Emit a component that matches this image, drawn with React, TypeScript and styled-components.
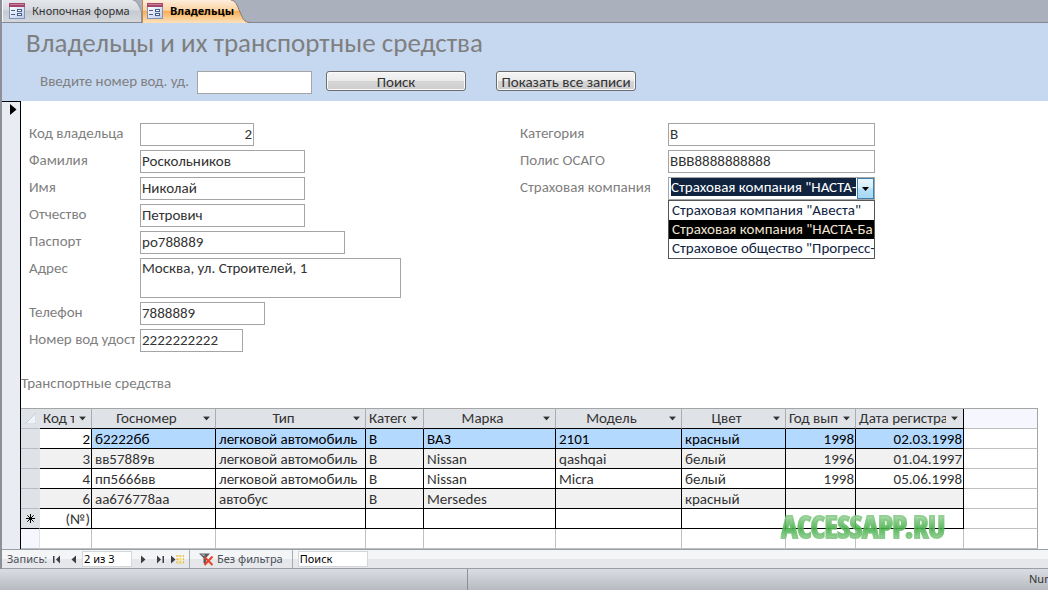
import React from 'react';
import styled, { createGlobalStyle, css } from 'styled-components';

const textFont = '"Carlito", "Open Sans", "Noto Sans", sans-serif';
const chromeFont = '"Noto Sans", "Open Sans", sans-serif';

const GlobalStyle = createGlobalStyle`
  * { box-sizing: border-box; }
  body { margin: 0; background: #fff; overflow: hidden; }
  button, input, select, textarea { font: inherit; color: inherit; margin: 0; border-radius: 0; }
  svg { flex: none; }
`;

const Window = styled.div`
  display: flex;
  flex-direction: column;
  min-height: 100vh;
  padding-bottom: 2px;
  font: 15px/20px ${textFont};
  color: #333;
`;

const Workspace = styled.div`
  flex: 1;
  display: flex;
  flex-direction: column;
  border-left: 2px solid #8d9097;
`;

/* Document tabs */

const TabBar = styled.div`
  display: flex;
  height: 23px;
  background: #abb1bc;
  border-bottom: 1px solid #85888d;
`;

const TabButton = styled.button<{ $active?: boolean }>`
  display: flex;
  border: 0;
  padding: 0;
  height: ${p => (p.$active ? 23 : 22)}px;
  background: none;
  font: ${p => (p.$active ? 'bold' : 'normal')} 11px/22px ${chromeFont};
  color: ${p => (p.$active ? '#000' : '#333')};
  white-space: nowrap;
`;

/* The caption may run on over the slanted edge, so the face is stacked above it. */
const TabFace = styled.span<{ $active?: boolean }>`
  position: relative;
  z-index: 1;
  display: flex;
  align-items: center;
  gap: 7px;
  height: 100%;
  padding: 0 0 1px ${p => (p.$active ? 4 : 6)}px;
  width: ${p => (p.$active ? 84 : 130)}px;
  border-left: 1px solid ${p => (p.$active ? '#b98a55' : '#f4f6f8')};
  background: ${p =>
    p.$active
      ? 'linear-gradient(#fdeedd 0, #fbd2a0 45%, #f9ae55 50%, #fbc98a 75%, #fde2bd 100%)'
      : 'linear-gradient(#e3e6ea 0, #d6dade 45%, #c6cbd1 50%, #d4d7dc 100%)'};
`;

const TabEdge = ({ active }: { active?: boolean }) =>
  active ? (
    <svg width="24" height="23" viewBox="0 0 24 23" aria-hidden="true">
      <defs>
        <linearGradient id="edgeActive" x1="0" y1="0" x2="0" y2="1">
          <stop offset="0" stopColor="#fdeedd" />
          <stop offset=".45" stopColor="#fbd2a0" />
          <stop offset=".5" stopColor="#f9ae55" />
          <stop offset=".75" stopColor="#fbc98a" />
          <stop offset="1" stopColor="#fde2bd" />
        </linearGradient>
      </defs>
      <path d="M0 0H5C10 1 11 5 14 12S18 22 23 22.5V23H0Z" fill="url(#edgeActive)" />
      <path d="M5 0C10 1 11 5 14 12S18 22 24 22.5" fill="none" stroke="#8b7a6a" />
    </svg>
  ) : (
    <svg width="10" height="22" viewBox="0 0 10 22" aria-hidden="true">
      <defs>
        <linearGradient id="edgeIdle" x1="0" y1="0" x2="0" y2="1">
          <stop offset="0" stopColor="#e3e6ea" />
          <stop offset=".45" stopColor="#d6dade" />
          <stop offset=".5" stopColor="#c6cbd1" />
          <stop offset="1" stopColor="#d4d7dc" />
        </linearGradient>
      </defs>
      <path d="M0 0H1C5 1 7 5 9.500 12V22H0Z" fill="url(#edgeIdle)" />
      <path d="M1 0C5 1 7 5 9.500 12V22" fill="none" stroke="#8f949c" />
    </svg>
  );

const FormIcon = () => (
  <svg width="16" height="16" viewBox="0 0 16 16" aria-hidden="true">
    <defs>
      <linearGradient id="formFace" x1="0" y1="0" x2="1" y2="1">
        <stop offset="0" stopColor="#ffffff" />
        <stop offset="1" stopColor="#b9c9ea" />
      </linearGradient>
    </defs>
    <rect x="0.500" y="3.500" width="15" height="12" fill="url(#formFace)" stroke="#8093bb" />
    <rect x="0" y="0" width="16" height="4" fill="#a4456b" />
    <rect x="1" y="1" width="14" height="1" fill="#c9809d" />
    <path d="M2 7.500H6M2 11.500H6" stroke="#4a5f8c" />
    <rect x="8.500" y="6.500" width="4" height="2" fill="#fff" stroke="#4a5f8c" />
    <rect x="8.500" y="10.500" width="4" height="2" fill="#fff" stroke="#4a5f8c" />
  </svg>
);

/* Form header */

const FormHeader = styled.header`
  height: 78px;
  padding-left: 24px;
  background: #c6d8f0;
  color: #7f7f7f;
`;

const Title = styled.h1`
  margin: 0;
  padding-top: 3px;
  font-size: 27px;
  line-height: 34px;
  font-weight: normal;
`;

const SearchRow = styled.form`
  display: flex;
  align-items: flex-start;
  padding: 11px 0 0 14px;
`;

const SearchLabel = styled.label`
  width: 157px;
  white-space: nowrap;
`;

const ButtonGroup = styled.div`
  display: flex;
  gap: 30px;
  margin-left: 14px;
`;

const Button = styled.button`
  width: 140px;
  height: 20px;
  padding: 0;
  border: 1px solid #6d6d6d;
  border-radius: 3px;
  background: linear-gradient(#f4f4f4 0, #ebebeb 48%, #d6d6d6 52%, #cdcdcd 100%);
  box-shadow: inset 0 0 0 1px #fafafa;
  line-height: 20px;
  color: #333;
  white-space: nowrap;
`;

/* Record details */

const Detail = styled.main`
  flex: 1;
  display: flex;
`;

const RecordSelector = styled.div`
  width: 19px;
  flex: none;
  padding: 2px 0 0 8px;
  background: #e9ecf2;
  border: solid #000;
  border-width: 1px 1px 0 0;

  svg { display: block; }
`;

const DetailBody = styled.div`
  flex: 1;
  min-width: 0;
  display: flex;
  flex-direction: column;
`;

const Columns = styled.div`
  display: grid;
  grid-template-columns: 491px 1fr;
  padding: 22px 0 0 8px;
`;

const FieldGroup = styled.div<{ $labelWidth: number }>`
  display: grid;
  grid-template-columns: ${p => p.$labelWidth}px 1fr;
  row-gap: 4px;
  align-content: start;
`;

const FieldLabel = styled.label`
  margin-right: 5px;
  overflow: hidden;
  color: #7f7f7f;
  white-space: nowrap;
`;

const box = css`
  border: 1px solid #a5a5a5;
  background: #fff;
  color: #333;
  outline: 0;
`;

const TextInput = styled.input<{ $width: number; $right?: boolean }>`
  ${box}
  width: ${p => p.$width}px;
  height: 23px;
  padding: 0 1px 2px;
  text-align: ${p => (p.$right ? 'right' : 'left')};
`;

const TextBlock = styled.textarea`
  ${box}
  display: block;
  width: 261px;
  height: 40px;
  padding: 0 1px;
  line-height: 19px;
  resize: none;
  overflow: hidden;
`;

const Combo = styled.div`
  ${box}
  position: relative;
  display: flex;
  width: 207px;
  height: 23px;
  padding: 0 0 0 2px;
`;

const ComboSelect = styled.select`
  flex: 1;
  min-width: 0;
  height: 18px;
  padding: 0;
  border: 0;
  appearance: none;
  outline: 0;
  background: #10243f;
  color: #fff;
  line-height: 18px;
  text-overflow: clip;
`;

const ComboButton = styled.button`
  display: flex;
  align-items: center;
  justify-content: center;
  width: 17px;
  height: 21px;
  margin-left: 1px;
  padding: 0;
  border: 1px solid #3c7fb1;
  background: linear-gradient(#e8f5fd 0, #d3ecfb 48%, #b8e0f8 52%, #a6d8f5 100%);
`;

const ComboList = styled.ul`
  position: absolute;
  left: -1px;
  right: -1px;
  top: 22px;
  margin: 0;
  padding: 0;
  list-style: none;
  border: 1px solid #555;
  background: #fff;
`;

const ComboOption = styled.li<{ $selected?: boolean }>`
  height: 19px;
  padding-left: 3px;
  overflow: hidden;
  line-height: 19px;
  white-space: nowrap;
  color: ${p => (p.$selected ? '#efe3d0' : '#10243f')};
  background: ${p => (p.$selected ? '#000' : '#fff')};
`;

/* Vehicles datasheet */

const SheetCaption = styled.h2`
  margin: 21px 0 0;
  font-size: 15px;
  line-height: 20px;
  font-weight: normal;
  color: #7f7f7f;
`;

const SheetFrame = styled.div`
  position: relative;
  margin: 15px 10px 0 0;
`;

const Sheet = styled.table`
  width: 100%;
  table-layout: fixed;
  border-spacing: 0;
  border-top: 1px solid #a5a5a5;
`;

const Col = styled.col<{ $width?: number }>`
  width: ${p => (p.$width ? `${p.$width}px` : 'auto')};
`;

const cellBase = css`
  height: 20px;
  padding: 0;
  overflow: hidden;
  font-weight: normal;
  white-space: nowrap;
`;

const HeadCell = styled.th<{ $last?: boolean }>`
  ${cellBase}
  border-bottom: 1px solid #000;
  border-right: 1px solid ${p => (p.$last ? '#000' : '#a9adb3')};
  background: #dfe2e7;
  line-height: 19px;
`;

const HeadInner = styled.div`
  display: flex;
  align-items: center;
  padding: 0 5px 0 3px;
`;

const HeadText = styled.span`
  flex: 1;
  min-width: 0;
  margin-right: 5px;
  overflow: hidden;
  text-align: center;
`;

const FilterButton = styled.button`
  display: flex;
  width: 7px;
  padding: 0;
  border: 0;
  background: none;
`;

const Cell = styled.td<{ $right?: boolean; $fill?: string }>`
  ${cellBase}
  padding: 2px 1px 0 3px;
  border: solid #000;
  border-width: 0 1px 1px 0;
  background: ${p => p.$fill || '#fff'};
  line-height: 17px;
  text-align: ${p => (p.$right ? 'right' : 'left')};
`;

const Row = styled.tr<{ $current?: boolean }>`
  color: ${p => (p.$current ? '#000' : '#333')};
`;

const Gutter = styled.th<{ $line?: string; $fill?: string }>`
  ${cellBase}
  border-bottom: 1px solid ${p => p.$line || '#b9bdc4'};
  border-right: 1px solid #dfe2e7;
  background: ${p => p.$fill || '#dfe2e7'};

  svg { display: block; margin: 0 auto; }
`;

const BlankCell = styled.td<{ $tint?: boolean; $edge?: boolean }>`
  ${cellBase}
  border: solid #c0c0c0;
  border-width: 0 1px 1px 0;
  border-right-color: ${p => (p.$edge ? '#a5a5a5' : '#c0c0c0')};
  background: ${p => (p.$tint ? '#f5f6fe' : '#fff')};
`;

const Watermark = styled.div`
  position: absolute;
  right: 93px;
  bottom: 5px;
  font: bold 30px/34px "Open Sans Condensed", "Open Sans", sans-serif;
  color: transparent;
  background: linear-gradient(#a3d6a3 20%, #3fae43 55%, #9ad09a 85%);
  background-clip: text;
  -webkit-text-stroke: 2px rgba(110, 192, 112, 0.5);
  opacity: 0.9;
`;

/* Record navigation */

const NavBar = styled.nav`
  display: flex;
  align-items: center;
  height: 20px;
  border: solid #9a9ea6;
  border-width: 1px 0;
  background: linear-gradient(#f4f5f6 50%, #e5e7ea 50%);
  font: 11px/18px ${chromeFont};
  color: #4a4f57;
`;

const NavGroup = styled.div`
  display: flex;
  align-items: center;
  height: 18px;
  padding: 0 3px 0 5px;
  border-right: 1px solid #a5a9b0;

  &:last-child { border-right: 0; }
`;

const NavLabel = styled.label`
  width: 41px;
  white-space: nowrap;
`;

const NavButton = styled.button`
  display: flex;
  align-items: center;
  justify-content: center;
  width: 17px;
  height: 18px;
  padding: 0;
  border: 0;
  background: none;
`;

const NavInput = styled.input<{ $width: number }>`
  width: ${p => p.$width}px;
  height: 16px;
  padding: 0 1px;
  border: 1px solid #d3d6db;
  background: #fff;
  color: #000;
  outline: 0;

  & + button { margin-left: 3px; }
`;

const FilterToggle = styled.button`
  display: flex;
  align-items: center;
  gap: 3px;
  height: 18px;
  padding: 0 6px 0 4px;
  border: 0;
  background: none;
  white-space: nowrap;
`;

const StatusBar = styled.footer`
  display: flex;
  height: 21px;
  background: linear-gradient(#dadde1, #b7bbc1);
  font: 11px/20px ${chromeFont};
  color: #333;
`;

const StatusPane = styled.div`
  width: 468px;
  border-right: 1px solid #8d9097;
`;

const StatusKey = styled.span`
  width: 19px;
  margin-left: auto;
  overflow: hidden;
`;

const ComboArrow = () => (
  <svg width="7" height="4" viewBox="0 0 7 4" aria-hidden="true">
    <path d="M0 0H7L3.500 4Z" fill="#000" />
  </svg>
);

const FilterArrow = () => (
  <svg width="7" height="5" viewBox="0 0 7 5" aria-hidden="true">
    <path d="M0 0H7L3.500 5Z" fill="#fff" />
    <path d="M0 0.500H7L3.500 4.500Z" fill="#333" />
  </svg>
);

const NavGlyph = ({ kind }: { kind: 'first' | 'prev' | 'next' | 'last' | 'new' }) => (
  <svg width={kind === 'new' ? 13 : 9} height="9" viewBox={kind === 'new' ? '0 0 13 9' : '0 0 9 9'} aria-hidden="true">
    {kind === 'first' && <path d="M1 1H2.500V8H1ZM8 0.500V8.500L4 4.500Z" fill="#3b3f46" />}
    {kind === 'prev' && <path d="M7 0.500V8.500L2.500 4.500Z" fill="#3b3f46" />}
    {kind === 'next' && <path d="M2 0.500V8.500L6.500 4.500Z" fill="#3b3f46" />}
    {kind === 'last' && <path d="M1 0.500V8.500L5 4.500ZM6.500 1H8V8H6.500Z" fill="#3b3f46" />}
    {kind === 'new' && (
      <>
        <path d="M0 0.500V8.500L4.500 4.500Z" fill="#3b3f46" />
        <path d="M5.500 1H13M5.500 8H13M6 4.500H13M6 0V9M9 0V9M12.500 0V9" stroke="#edc13f" strokeDasharray="2 1" />
        <rect x="7.500" y="3" width="3.500" height="3" fill="#fbe68a" />
      </>
    )}
  </svg>
);

const fields = [
  { id: 'code', label: 'Код владельца', value: '2', width: 114, right: true },
  { id: 'surname', label: 'Фамилия', value: 'Роскольников', width: 165 },
  { id: 'name', label: 'Имя', value: 'Николай', width: 165 },
  { id: 'patronymic', label: 'Отчество', value: 'Петрович', width: 165 },
  { id: 'passport', label: 'Паспорт', value: 'ро788889', width: 205 },
  { id: 'address', label: 'Адрес', value: 'Москва, ул. Строителей, 1', width: 0 },
  { id: 'phone', label: 'Телефон', value: '7888889', width: 125 },
  { id: 'licence', label: 'Номер вод удостоверения', value: '2222222222', width: 103 },
];

const companies = [
  'Страховая компания "Авеста"',
  'Страховая компания "НАСТА-Ба',
  'Страховое общество "Прогресс-',
];

const columns = [
  { title: 'Код тс', width: 52, right: true },
  { title: 'Госномер', width: 124 },
  { title: 'Тип', width: 150 },
  { title: 'Категория', width: 58 },
  { title: 'Марка', width: 132 },
  { title: 'Модель', width: 126 },
  { title: 'Цвет', width: 104 },
  { title: 'Год выпуска', width: 70, right: true },
  { title: 'Дата регистрации', width: 108, right: true },
];

const rows = [
  ['2', 'б2222бб', 'легковой автомобиль', 'В', 'ВАЗ', '2101', 'красный', '1998', '02.03.1998'],
  ['3', 'вв57889в', 'легковой автомобиль', 'В', 'Nissan', 'qashqai', 'белый', '1996', '01.04.1997'],
  ['4', 'пп5666вв', 'легковой автомобиль', 'В', 'Nissan', 'Micra', 'белый', '1998', '05.06.1998'],
  ['6', 'аа676778аа', 'автобус', 'В', 'Mersedes', '', 'красный', '', ''],
  ['(№)', '', '', '', '', '', '', '', ''],
];

const fillFor = (row: number, col: number) => {
  if (row === 0) return col === 0 ? '#fff' : '#b4d9ff';
  return row === 1 || row === 3 ? '#f1f1f1' : '#fff';
};

export default function App() {
  return (
    <Window>
      <GlobalStyle />
      <Workspace>
        <TabBar>
          <TabButton type="button">
            <TabFace><FormIcon />Кнопочная форма</TabFace>
            <TabEdge />
          </TabButton>
          <TabButton type="button" $active>
            <TabFace $active><FormIcon />Владельцы</TabFace>
            <TabEdge active />
          </TabButton>
        </TabBar>

        <FormHeader>
          <Title>Владельцы и их транспортные средства</Title>
          <SearchRow>
            <SearchLabel htmlFor="licence-search">Введите номер вод. уд.</SearchLabel>
            <TextInput id="licence-search" $width={115} />
            <ButtonGroup>
              <Button type="button">Поиск</Button>
              <Button type="button">Показать все записи</Button>
            </ButtonGroup>
          </SearchRow>
        </FormHeader>

        <Detail>
          <RecordSelector>
            <svg width="7" height="11" viewBox="0 0 7 11" aria-hidden="true">
              <path d="M0 0L6.500 5.500L0 11Z" fill="#000" />
            </svg>
          </RecordSelector>
          <DetailBody>
            <Columns>
              <FieldGroup $labelWidth={111}>
                {fields.map(f => (
                  <React.Fragment key={f.id}>
                    <FieldLabel htmlFor={f.id}>{f.label}</FieldLabel>
                    {f.id === 'address' ? (
                      <TextBlock id={f.id} defaultValue={f.value} />
                    ) : (
                      <TextInput id={f.id} $width={f.width} $right={f.right} defaultValue={f.value} />
                    )}
                  </React.Fragment>
                ))}
              </FieldGroup>
              <FieldGroup $labelWidth={148}>
                <FieldLabel htmlFor="category">Категория</FieldLabel>
                <TextInput id="category" $width={207} defaultValue="В" />
                <FieldLabel htmlFor="policy">Полис ОСАГО</FieldLabel>
                <TextInput id="policy" $width={207} defaultValue="ВВВ8888888888" />
                <FieldLabel htmlFor="company">Страховая компания</FieldLabel>
                <Combo>
                  <ComboSelect id="company" defaultValue={companies[1]}>
                    {companies.map(c => <option key={c}>{c}</option>)}
                  </ComboSelect>
                  <ComboButton type="button" aria-label="Закрыть список"><ComboArrow /></ComboButton>
                  <ComboList role="listbox" aria-label="Страховая компания">
                    {companies.map((c, i) => (
                      <ComboOption key={c} role="option" aria-selected={i === 1} $selected={i === 1}>{c}</ComboOption>
                    ))}
                  </ComboList>
                </Combo>
              </FieldGroup>
            </Columns>

            <SheetCaption>Транспортные средства</SheetCaption>
            <SheetFrame>
              <Sheet>
                <colgroup>
                  <Col $width={19} />
                  {columns.map(c => <Col key={c.title} $width={c.width} />)}
                  <Col />
                </colgroup>
                <thead>
                  <tr>
                    <Gutter>
                      <svg width="11" height="11" viewBox="0 0 11 11" aria-hidden="true">
                        <path d="M11 0V11H0Z" fill="#eff2f6" stroke="#c5cedb" />
                      </svg>
                    </Gutter>
                    {columns.map((c, i) => (
                      <HeadCell key={c.title} $last={i === columns.length - 1}>
                        <HeadInner>
                          <HeadText>{c.title}</HeadText>
                          <FilterButton type="button" aria-label={`Фильтр: ${c.title}`}><FilterArrow /></FilterButton>
                        </HeadInner>
                      </HeadCell>
                    ))}
                    <BlankCell $tint $edge />
                  </tr>
                </thead>
                <tbody>
                  {rows.map((r, ri) => (
                    <Row key={r[0]} $current={ri === 0}>
                      <Gutter $line={ri >= 4 ? '#000' : undefined}>
                        {ri === 4 && (
                          <svg width="9" height="9" viewBox="0 0 9 9" aria-hidden="true">
                            <path d="M4.500 0V9M0 4.500H9M1.300 1.300L7.700 7.700M7.700 1.300L1.300 7.700" stroke="#000" />
                          </svg>
                        )}
                      </Gutter>
                      {r.map((v, ci) => (
                        <Cell key={ci} $right={columns[ci].right} $fill={fillFor(ri, ci)}>{v}</Cell>
                      ))}
                      <BlankCell $edge />
                    </Row>
                  ))}
                  <tr>
                    <Gutter $fill="#f5f6fe" />
                    {columns.map(c => <BlankCell key={c.title} />)}
                    <BlankCell $edge />
                  </tr>
                </tbody>
              </Sheet>
              <Watermark>ACCESSAPP.RU</Watermark>
            </SheetFrame>
          </DetailBody>
        </Detail>

        <NavBar>
          <NavGroup>
            <NavLabel htmlFor="record">Запись:</NavLabel>
            <NavButton type="button" aria-label="Первая запись"><NavGlyph kind="first" /></NavButton>
            <NavButton type="button" aria-label="Предыдущая запись"><NavGlyph kind="prev" /></NavButton>
            <NavInput id="record" $width={50} defaultValue="2 из 3" />
            <NavButton type="button" aria-label="Следующая запись"><NavGlyph kind="next" /></NavButton>
            <NavButton type="button" aria-label="Последняя запись"><NavGlyph kind="last" /></NavButton>
            <NavButton type="button" aria-label="Новая запись"><NavGlyph kind="new" /></NavButton>
          </NavGroup>
          <NavGroup>
            <FilterToggle type="button">
              <svg width="15" height="13" viewBox="0 0 15 13" aria-hidden="true">
                <path d="M0 0.500H11L7 5V12L4.500 10V5Z" fill="#5a5d63" />
                <path d="M2 1.500H6L5 3Z" fill="#c9ccd1" />
                <path d="M5.500 4L13.500 12M13.500 3.500L5.500 12" stroke="#e8432e" strokeWidth="2" />
              </svg>
              Без фильтра
            </FilterToggle>
          </NavGroup>
          <NavGroup>
            <NavInput aria-label="Поиск" $width={70} defaultValue="Поиск" />
          </NavGroup>
        </NavBar>
      </Workspace>

      <StatusBar>
        <StatusPane />
        <StatusKey>Num</StatusKey>
      </StatusBar>
    </Window>
  );
}
